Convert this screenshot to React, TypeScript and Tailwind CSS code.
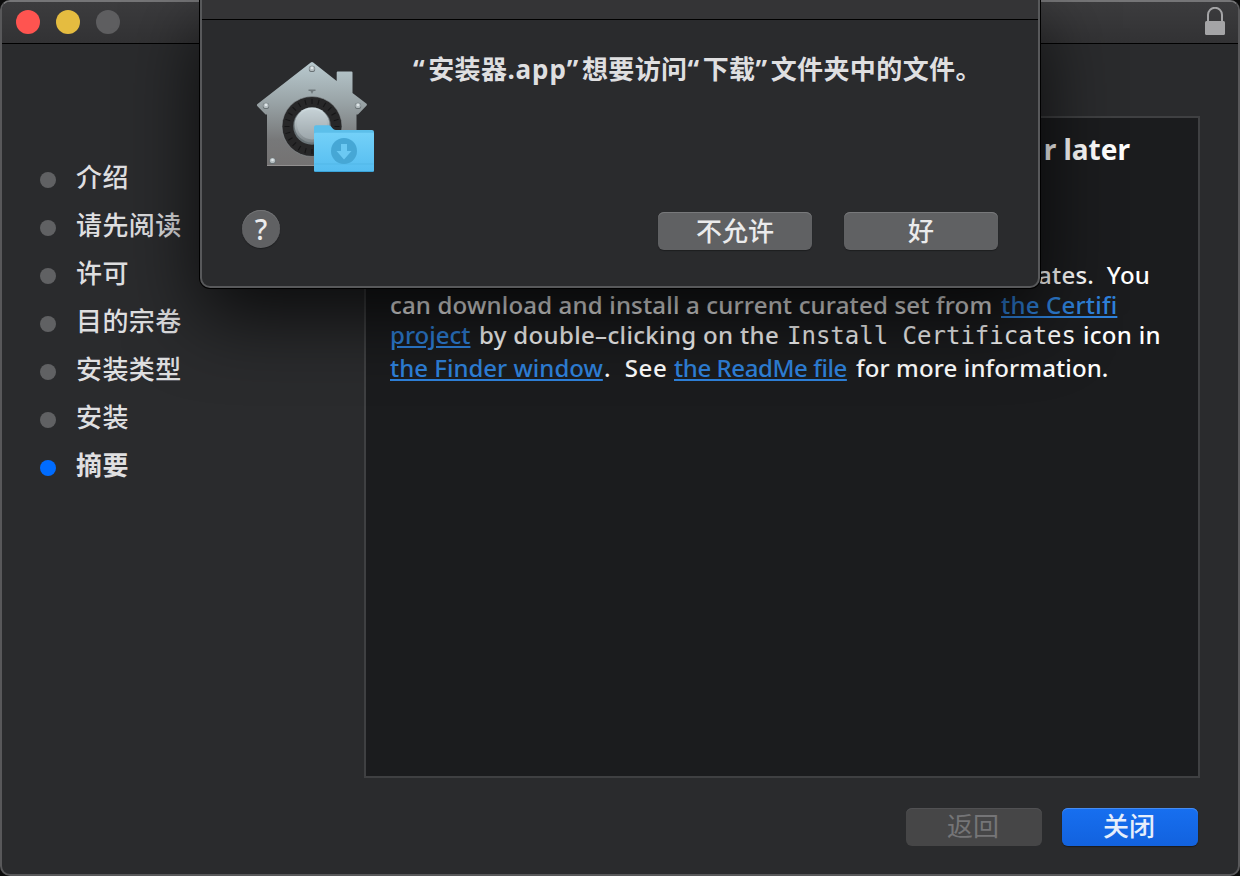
import React from "react";

type Step = { label: string; active?: boolean };

const steps: Step[] = [
  { label: "介绍" },
  { label: "请先阅读" },
  { label: "许可" },
  { label: "目的宗卷" },
  { label: "安装类型" },
  { label: "安装" },
  { label: "摘要", active: true },
];

function LockIcon() {
  return (
    <svg className="h-7 w-5" viewBox="0 0 20 28" fill="none">
      <path d="M3 15V7.800a7 7 0 0 1 14 0V15" stroke="#a4a4a6" strokeWidth="2" />
      <rect x="0" y="14" width="20" height="14" rx="1.5" fill="#a4a4a6" />
    </svg>
  );
}

function Rivet({ x, y }: { x: number; y: number }) {
  return (
    <g>
      <circle cx={x} cy={y + 0.4} r="3.200" fill="#697275" />
      <circle cx={x} cy={y} r="2.600" fill="#b4bdc0" />
      <circle cx={x} cy={y - 0.5} r="1.300" fill="#dfe6e8" />
    </g>
  );
}

function GatekeeperIcon() {
  const ticks = Array.from({ length: 24 }, (_, i) => i * 15);
  return (
    <svg className="h-[130px] w-[140px]" viewBox="0 0 140 130">
      <defs>
        <linearGradient id="house" x1="0" y1="0" x2="0" y2="1">
          <stop offset="0" stopColor="#b9cacf" />
          <stop offset="0.4" stopColor="#98a2a5" />
          <stop offset="0.75" stopColor="#777879" />
          <stop offset="1" stopColor="#747272" />
        </linearGradient>
        <linearGradient id="knob" x1="0" y1="0" x2="0" y2="1">
          <stop offset="0" stopColor="#d3dfe3" />
          <stop offset="1" stopColor="#7d8589" />
        </linearGradient>
        <linearGradient id="folder" x1="0" y1="0" x2="0" y2="1">
          <stop offset="0" stopColor="#73d0f8" />
          <stop offset="1" stopColor="#55bdf0" />
        </linearGradient>
      </defs>
      <path
        d="M65.8 12.4Q67 11.6 68.2 12.4L91.7 31V22.5Q91.7 21.5 92.7 21.5H106.5Q107.5 21.5 107.5 22.5V43L121.6 53.8Q122.4 54.8 121.6 55.6L113 64.5H111.5V116H22V64.5H20.5L12.2 56Q11.5 55 12.2 54.2Z"
        fill="url(#house)"
      />
      <path d="M22 115.5H72" stroke="#929090" strokeWidth="1" />
      <path d="M63.5 39.5H70.5V41H68.5L67 44L65.500 41H63.5Z" fill="#70797c" />
      <circle cx="67" cy="76.500" r="30" fill="#272728" stroke="#8e9698" strokeWidth="0.6" />
      {ticks.map((a) => (
        <path
          key={a}
          d="M67 49V54"
          stroke="#151516"
          strokeWidth="1"
          transform={`rotate(${a} 67 76.500)`}
        />
      ))}
      <circle cx="67" cy="76" r="18.800" fill="#697377" />
      <circle cx="67" cy="75" r="17.500" fill="url(#knob)" />
      <circle cx="67" cy="74.500" r="15" fill="#bac5ca" opacity="0.45" />
      <Rivet x={67} y={18.500} />
      <Rivet x={21} y={55.500} />
      <Rivet x={113} y={55.500} />
      <Rivet x={27.500} y={110.500} />
      <path
        d="M71 75.200H83.500C87 75.200 87 80 91 80H127Q129 80 129 82V120Q129 122 127 122H71Q69 122 69 120V77.200Q69 75.200 71 75.200Z"
        fill="#5cbfea"
      />
      <path
        d="M69 84Q69 82.800 71 82.800H127Q129 82.800 129 84V120Q129 122 127 122H71Q69 122 69 120Z"
        fill="url(#folder)"
      />
      <path d="M69.500 114H128.500" stroke="#4fb4e4" strokeWidth="0.7" />
      <path d="M70 121.500H128" stroke="#3aa3d8" strokeWidth="1" />
      <circle cx="99" cy="101" r="13" fill="#46a7d5" />
      <path d="M96 94H102V101H106.500L99 109.500L91.500 101H96Z" fill="#6bc9f3" />
    </svg>
  );
}

function Run({ className, children }: { className: string; children: React.ReactNode }) {
  return <span className={`inline-block whitespace-pre ${className}`}>{children}</span>;
}

function Quote({ children }: { children: React.ReactNode }) {
  return <span className="tracking-[3.6px]">{children}</span>;
}

const link = "text-[#2f82dc] underline decoration-2 underline-offset-[2px]";

export default function App() {
  return (
    <div className="relative h-[876px] w-[1240px] overflow-hidden bg-[#0b0b0b] font-['Noto_Sans','Noto_Sans_CJK_SC',sans-serif] text-[#dfdfe0]">
      <div className="flex h-full w-full flex-col overflow-hidden rounded-[10px] border-2 border-[#58585a] border-t-[#757577] bg-[#2a2b2d]">
        <header className="flex h-[42px] shrink-0 items-start justify-between border-b border-black bg-linear-to-b from-[#3c3c3e] to-[#323234] pr-[13px] pl-[14px]">
          <div className="flex gap-4 pt-2">
            <span className="size-6 rounded-full bg-[#ff5450]" />
            <span className="size-6 rounded-full bg-[#e5bc40]" />
            <span className="size-6 rounded-full bg-[#5e5e60]" />
          </div>
          <div className="pt-[5px]">
            <LockIcon />
          </div>
        </header>

        <div className="flex pt-[72px]">
          <nav className="w-[362px] pt-[36px] pl-[38px]">
            <ul>
              {steps.map((s) => (
                <li key={s.label} className="flex h-12 items-center text-[26px] leading-[48px] tracking-[0.4px]">
                  <span
                    className={
                      s.active
                        ? "mt-2 size-4 rounded-full bg-[#006cff]"
                        : "mt-2 size-4 rounded-full bg-[#606163]"
                    }
                  />
                  <span className={s.active ? "ml-5 pt-px font-bold" : "ml-5 pt-px font-medium"}>{s.label}</span>
                </li>
              ))}
            </ul>
          </nav>

          <main className="h-[662px] w-[836px] border-2 border-[#3f4042] bg-[#1b1c1e] pl-[24px] text-2xl leading-[30px] font-medium text-white">
            <h1 className="mt-[13px] mr-[68px] text-right text-[28px] leading-9 font-bold">r later</h1>
            <div className="mt-[93px] mr-[48px] h-[30px] text-right tracking-[0.2px] whitespace-pre">ates.  You</div>
            <div className="flex h-[30px]">
              <Run className="w-[611px] tracking-[0.18px]">can download and install a current curated set from</Run>
              <Run className="tracking-[0.2px]"><span className={link}>the Certifi</span></Run>
            </div>
            <div className="flex h-[33px]">
              <Run className="w-[89px]"><span className={link}>project</span></Run>
              <Run className="w-[308px] tracking-[0.34px]">by double–clicking on the</Run>
              <Run className="w-[296px] pt-px font-['DejaVu_Sans_Mono',monospace] font-normal">Install Certificates</Run>
              <Run className="tracking-[0.3px]">icon in</Run>
            </div>
            <div className="flex h-[30px]">
              <Run className="w-[214px]"><span className={link}>the Finder window</span></Run>
              <Run className="w-[70px] tracking-[0.6px]">.  See</Run>
              <Run className="w-[182px] tracking-[-0.42px]"><span className={link}>the ReadMe file</span></Run>
              <Run className="tracking-[0.12px]">for more information.</Run>
            </div>
          </main>
        </div>

        <footer className="mt-[30px] flex justify-end gap-5 pr-10 text-[26px] leading-[36px]">
          <button className="flex h-[38px] w-[136px] justify-center rounded-[6px] bg-[#464647] pr-[2px] text-[#757577] shadow-[inset_0_1px_0_#515153]">返回</button>
          <button className="flex h-[38px] w-[136px] justify-center rounded-[6px] bg-linear-to-b from-[#176ff0] to-[#1262de] pr-[2px] font-medium text-[#e6eefb] shadow-[inset_0_1px_0_#468cf2,0_1px_1px_#1a1b1d]">关闭</button>
        </footer>
      </div>

      <section className="absolute top-0 left-[200px] flex h-[288px] w-[840px] flex-col rounded-b-[10px] border-2 border-t-0 border-[#58595b] bg-[#2a2b2d] shadow-[0_0_0_1px_#000,0_28px_76px_rgba(0,0,0,0.75)]">
        <div className="h-5 shrink-0 border-b border-black bg-[#343436]" />
        <div className="flex">
          <div className="pt-[30px] pl-[43px]">
            <GatekeeperIcon />
          </div>
          <h2 className="pt-[29px] pl-[28px] text-[26px] leading-10 font-bold tracking-[0.4px] whitespace-nowrap">
            <Quote>“</Quote>安装器<span className="tracking-[0.9px]">.app</span><Quote>”</Quote>想要访问<Quote>“</Quote>下载<Quote>”</Quote>文件夹中的文件。
          </h2>
        </div>
        <div className="mt-[30px] flex pl-10 text-[26px] leading-[38px]">
          <button className="size-[38px] rounded-full bg-[#606163] text-[28px] font-medium text-[#ebebec] shadow-[inset_0_1px_0_#737476,0_1px_1px_#1d1e20]">?</button>
          <button className="mt-[2px] ml-[378px] h-[38px] w-[154px] rounded-[6px] bg-[#606163] font-medium text-[#ebebec] shadow-[inset_0_1px_0_#78797b,0_1px_1px_#1d1e20]">不允许</button>
          <button className="mt-[2px] ml-8 h-[38px] w-[154px] rounded-[6px] bg-[#606163] font-medium text-[#ebebec] shadow-[inset_0_1px_0_#78797b,0_1px_1px_#1d1e20]">好</button>
        </div>
      </section>
    </div>
  );
}
